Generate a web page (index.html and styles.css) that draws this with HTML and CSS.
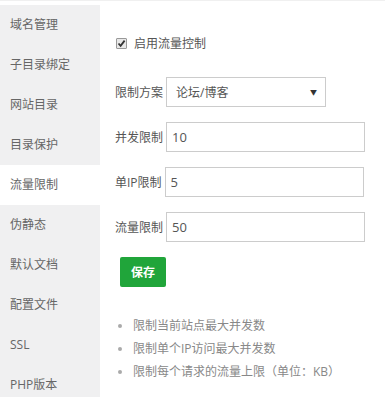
FILE: index.html
```html
<!DOCTYPE html>
<html lang="zh-CN">
<head>
  <meta charset="UTF-8" />
  <meta name="viewport" content="width=device-width, initial-scale=1.0" />
  <title>流量限制</title>
  <link rel="stylesheet" href="styles.css">
</head>
<body>

  <div class="layout">
    <ul class="side-menu">
      <li>域名管理</li>
      <li>子目录绑定</li>
      <li>网站目录</li>
      <li>目录保护</li>
      <li class="active">流量限制</li>
      <li>伪静态</li>
      <li>默认文档</li>
      <li>配置文件</li>
      <li>SSL</li>
      <li>PHP版本</li>
    </ul>

    <div class="content">
      <label class="check-row">
        <span class="check-box">
          <svg width="9" height="9" viewBox="0 0 9 9">
            <path d="M1.5 4.5 L3.6 6.8 L7.6 1.6" fill="none" stroke="#333" stroke-width="1.8" />
          </svg>
        </span>
        <span>启用流量控制</span>
      </label>

      <div class="form-row">
        <span class="form-label">限制方案</span>
        <div class="select-box">
          <span>论坛/博客</span>
          <span class="arrow">&#9660;</span>
        </div>
      </div>

      <div class="form-row">
        <span class="form-label">并发限制</span>
        <input class="text-input" type="text" value="10" />
      </div>

      <div class="form-row">
        <span class="form-label">单IP限制</span>
        <input class="text-input" type="text" value="5" />
      </div>

      <div class="form-row">
        <span class="form-label">流量限制</span>
        <input class="text-input" type="text" value="50" />
      </div>

      <button class="btn-save">保存</button>

      <ul class="help-list">
        <li>限制当前站点最大并发数</li>
        <li>限制单个IP访问最大并发数</li>
        <li>限制每个请求的流量上限（单位：KB）</li>
      </ul>
    </div>
  </div>

</body>
</html>
```

FILE: styles.css
```css
body {
  margin: 0;
  font-family: "Open Sans", "Noto Sans CJK SC", sans-serif;
  font-size: 12px;
  color: #555;
  background-color: #fff;
  border-top: 1px solid #f0f0f0;
  padding-top: 4px;
}

.layout {
  display: flex;
}

.side-menu {
  list-style: none;
  margin: 0;
  padding: 0;
  width: 100px;
  background-color: #f0f0f1;
  color: #666;
}

.side-menu li {
  height: 40px;
  line-height: 40px;
  padding-left: 10px;
}

.side-menu li.active {
  background-color: #fff;
}

.content {
  flex: 1;
  padding: 28px 0 0 16px;
}

.check-row {
  display: flex;
  align-items: center;
  height: 20px;
  margin-bottom: 24px;
}

.check-box {
  display: flex;
  align-items: center;
  justify-content: center;
  box-sizing: border-box;
  width: 11px;
  height: 11px;
  margin-right: 7px;
  border: 1px solid #999;
  border-radius: 1px;
  background-color: #e8e8e8;
}

.form-row {
  display: flex;
  align-items: center;
  height: 30px;
  margin-bottom: 15px;
}

.form-label {
  margin-right: 3px;
  margin-left: -1px;
}

.select-box {
  display: flex;
  justify-content: space-between;
  align-items: center;
  box-sizing: border-box;
  width: 160px;
  height: 30px;
  border: 1px solid #ccc;
  padding: 0 8px 0 9px;
  color: #555;
}

.select-box .arrow {
  font-size: 7px;
  color: #333;
}

.text-input {
  box-sizing: border-box;
  width: 199px;
  height: 30px;
  border: 1px solid #ccc;
  padding: 0 5px;
  font-family: inherit;
  font-size: 13px;
  color: #555;
}

.btn-save {
  display: block;
  margin: 1px 0 0 4px;
  width: 46px;
  height: 30px;
  border: none;
  border-radius: 2px;
  background-color: #20a53a;
  color: #fff;
  font-family: inherit;
  font-size: 12px;
  font-weight: bold;
}

.help-list {
  margin: 27px 0 0 0;
  padding-left: 17px;
  color: #888;
  line-height: 23px;
}

.help-list li::marker {
  color: #aaa;
}
```
